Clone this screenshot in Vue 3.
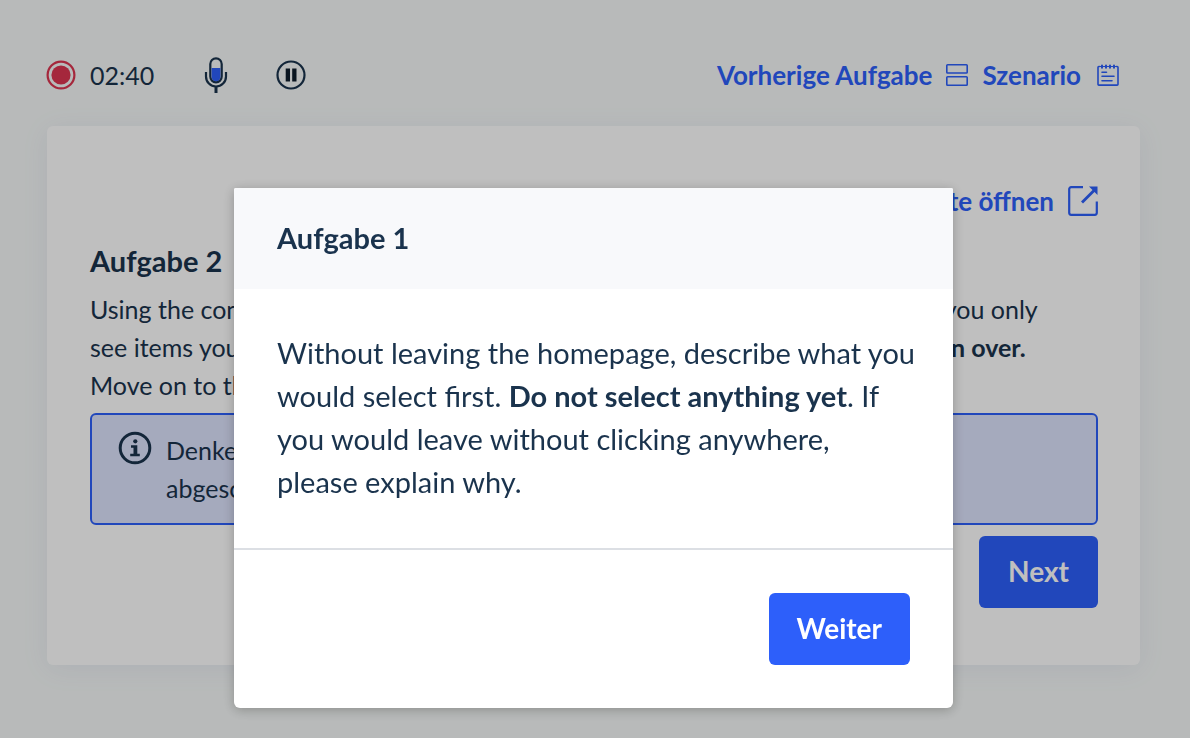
<script setup>
import { ref } from 'vue'

const time = ref('02:40')
const dialogOpen = ref(true)
</script>

<template>
  <div class="page">
    <header class="topbar">
      <div class="recorder">
        <svg class="ic30" viewBox="0 0 30 30" aria-hidden="true">
          <circle cx="15" cy="15" r="13.4" fill="none" stroke="#dc3550" stroke-width="2.2" />
          <circle cx="15" cy="15" r="9.6" fill="#dc3550" />
        </svg>
        <span class="time">{{ time }}</span>
      </div>
      <button class="icon-btn mic" type="button" aria-label="Mikrofon">
        <svg width="24" height="38" viewBox="0 0 24 38" aria-hidden="true">
          <rect x="6.3" y="2.3" width="11.4" height="24" rx="5.7" fill="none" stroke="#1a334d" stroke-width="2.2" />
          <path d="M7.6 12h8.800v8.800a4.400 4.400 0 0 1-8.800 0z" fill="#2d5ffa" />
          <path d="M2 16v4.500a10 10 0 0 0 20 0V16" fill="none" stroke="#1a334d" stroke-width="2.200" />
          <path d="M12 30.500V37" stroke="#1a334d" stroke-width="3" />
        </svg>
      </button>
      <button class="icon-btn" type="button" aria-label="Pause">
        <svg class="ic30" viewBox="0 0 30 30" aria-hidden="true">
          <circle cx="15" cy="15" r="13.500" fill="none" stroke="#1a334d" stroke-width="2.200" />
          <path d="M9.700 8.500h4.300v13H9.700zM16.200 8.500h4.300v13h-4.300z" fill="#0e1c2b" />
        </svg>
      </button>
      <nav class="links">
        <a href="#previous" class="link">
          <span>Vorherige Aufgabe</span>
          <svg width="22" height="22" viewBox="0 0 22 22" fill="none" stroke="currentColor" stroke-width="1.600" aria-hidden="true">
            <rect x="0.800" y="0.800" width="20.400" height="8.200" rx="0.800" />
            <rect x="0.800" y="12.800" width="20.400" height="8.400" rx="0.800" />
          </svg>
        </a>
        <a href="#scenario" class="link scenario">
          <span>Szenario</span>
          <svg width="22" height="22" viewBox="0 0 22 22" fill="none" stroke="currentColor" stroke-width="1.600" stroke-linecap="round" aria-hidden="true">
            <path d="M2.500 2.500H1.800a.8.800 0 0 0-.8.800v17a.8.800 0 0 0 .8.800h18.400a.8.800 0 0 0 .8-.8v-17a.8.800 0 0 0-.8-.8h-.7" />
            <path d="M5 1.500v2.200M9 1.500v2.200M13 1.500v2.200M17 1.500v2.200" stroke-width="2" />
            <path d="M5 8.300h4.500M5 12.300h12M5 16.700h10" />
            <path d="M3 2.500h16" stroke-width="1" />
          </svg>
        </a>
      </nav>
    </header>

    <main class="card">
      <a href="#website" class="link open">
        <span>Webseite öffnen</span>
        <svg class="ic30" viewBox="0 0 30 30" fill="none" stroke="currentColor" stroke-width="2.2" aria-hidden="true">
          <path d="M15 1.200H3.200a2 2 0 0 0-2 2v23.600a2 2 0 0 0 2 2h23.600a2 2 0 0 0 2-2V15.500" />
          <path d="M14 16.500L26.500 4" stroke-width="2.800" />
          <path d="M21 .5h8.500V9z" fill="currentColor" stroke="none" />
        </svg>
      </a>
      <h2 class="task-title">Aufgabe 2</h2>
      <p class="task-text">
        Using the controls on the search results page, change the current view so that you only<br />
        see items you would really consider buying soon <strong>with a rating of seven and then over.</strong><br />
        Move on to the next task when you are done.
      </p>
      <div class="hint">
        <svg class="info" width="34" height="34" viewBox="0 0 34 34" aria-hidden="true">
          <circle cx="17" cy="17" r="14.800" fill="none" stroke="#1a334d" stroke-width="3" />
          <circle cx="17.300" cy="10.300" r="2.100" fill="#1a334d" />
          <path d="M13 14.200h6.300v8.500h2.500v2.600h-9.600v-2.600h3.300v-5.900H13z" fill="#1a334d" />
        </svg>
        <p>Denke daran, laut zu sprechen, bis du die Aufgabe<br />abgeschlossen hast.</p>
      </div>
      <button class="btn next" type="button">Next</button>
    </main>

    <div v-if="dialogOpen" class="overlay">
      <section class="dialog" role="dialog" aria-modal="true" aria-labelledby="dialog-title">
        <h1 id="dialog-title" class="dialog-title">Aufgabe 1</h1>
        <p class="dialog-body">
          Without leaving the homepage, describe what you<br />
          would select first. <strong>Do not select anything yet</strong>. If<br />
          you would leave without clicking anywhere,<br />
          please explain why.
        </p>
        <footer class="dialog-foot">
          <button class="btn" type="button" @click="dialogOpen = false">Weiter</button>
        </footer>
      </section>
    </div>
  </div>
</template>

<style>
body {
  background: #f6f9f8;
}
</style>

<style scoped>
.page {
  box-sizing: border-box;
  min-height: 100vh;
  padding: 54px 50px 40px 47px;
  background: #f6f9f8;
  color: #1a334d;
  font-family: Lato, "Open Sans", sans-serif;
  font-size: 25px;
  line-height: 38px;
}

h1,
h2,
p {
  margin: 0;
}

.topbar {
  display: flex;
  align-items: center;
  height: 42px;
  margin-bottom: 30px;
}

.recorder {
  display: flex;
  align-items: center;
  gap: 14px;
  margin-left: -1px;
}

.icon-btn {
  display: flex;
  padding: 0;
  border: 0;
  background: none;
}

.mic {
  margin: 0 48px 0 50px;
}

.ic30 {
  width: 30px;
  height: 30px;
}

.links {
  display: flex;
  gap: 14px;
  margin-left: auto;
  padding-right: 21px;
}

.link {
  display: flex;
  align-items: center;
  gap: 14px;
  color: #2d5ffa;
  font-size: 26px;
  font-weight: 700;
  text-decoration: none;
}

.scenario {
  gap: 16px;
}

.card {
  display: flex;
  flex-direction: column;
  box-sizing: border-box;
  padding: 56px 42px 57px 43px;
  border-radius: 6px;
  background: #fff;
  box-shadow: 0 4px 28px rgba(60, 80, 180, 0.08);
}

.open {
  align-self: flex-end;
}

.task-title {
  margin-top: 22px;
  font-size: 29px;
  line-height: 38px;
  font-weight: 700;
}

.task-text {
  margin-top: 10px;
}

.hint {
  display: flex;
  gap: 14px;
  margin-top: 9px;
  padding: 16px 26px;
  border: 2px solid #2d5ffa;
  border-radius: 6px;
  background: #dde3fd;
}

.info {
  flex: none;
}

.btn {
  height: 72px;
  padding: 0 28px 2px;
  border: 0;
  border-radius: 6px;
  background: #2d5ffa;
  color: #fff;
  font-family: inherit;
  font-size: 28px;
  font-weight: 700;
}

.next {
  align-self: flex-end;
  margin-top: 11px;
  padding: 0 29px 2px;
}

.overlay {
  position: fixed;
  inset: 0;
  display: flex;
  align-items: flex-start;
  justify-content: center;
  padding: 188px 3px 0 0;
  background: rgba(0, 0, 0, 0.25);
}

.dialog {
  width: 719px;
  max-width: 100%;
  overflow: hidden;
  border-radius: 2px 2px 6px 6px;
  background: #fff;
  box-shadow: 0 2px 12px rgba(0, 0, 0, 0.25);
}

.dialog-title {
  padding: 28px 43px 30px;
  background: #f8f9fb;
  font-size: 29px;
  line-height: 43px;
  font-weight: 700;
}

.dialog-body {
  padding: 42px 36px 45px 43px;
  border-bottom: 2px solid #dcdfe4;
  font-size: 29px;
  line-height: 43px;
}

.dialog-foot {
  display: flex;
  justify-content: flex-end;
  padding: 43px;
}
</style>
